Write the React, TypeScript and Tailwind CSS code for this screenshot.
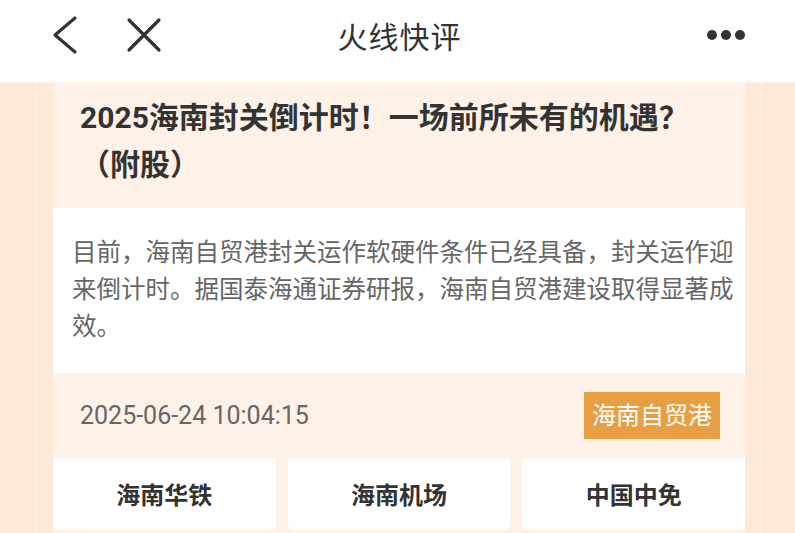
import React from 'react';

const stocks = ['海南华铁', '海南机场', '中国中免'];

export default function App() {
  return (
    <div
      className="w-[795px] h-[533px] overflow-hidden bg-[#fce9d6] text-[#333]"
      style={{ fontFamily: 'Roboto, "Noto Sans CJK SC", sans-serif' }}
    >
      {/* Top bar */}
      <div className="relative flex h-[82px] items-center bg-white pb-[12px]">
        <svg className="ml-[50px] h-[40px] w-[30px]" viewBox="0 0 30 40" fill="none">
          <path d="M25 3 L5 20 L25 37" stroke="#333" strokeWidth="3.2" strokeLinecap="round" strokeLinejoin="round" />
        </svg>
        <svg className="ml-[46px] h-[36px] w-[36px]" viewBox="0 0 36 36" fill="none">
          <path d="M3 3 L33 33 M33 3 L3 33" stroke="#333" strokeWidth="3.2" strokeLinecap="round" />
        </svg>
        <div className="flex-1 text-center text-[30px] tracking-[1px] text-[#333] -ml-[34px] pr-[36px] pt-[4px]">火线快评</div>
        <div className="mr-[50px] flex gap-[4px]">
          <span className="h-[10px] w-[10px] rounded-full bg-[#333]" />
          <span className="h-[10px] w-[10px] rounded-full bg-[#333]" />
          <span className="h-[10px] w-[10px] rounded-full bg-[#333]" />
        </div>
      </div>

      <div className="flex h-[451px] border-t border-[#fdf2e8]">
        <div className="w-[36px] shrink-0" />
        <div className="w-px shrink-0 bg-[#fff6ee]" />
        <div className="w-[16px] shrink-0" />

        {/* Card */}
        <div className="flex w-[692px] shrink-0 flex-col bg-[#fef1e7]">
          <div className="px-[27px] pt-[11px] pb-[20px] text-[30px] font-bold leading-[47px] text-[#333]">
            2025海南封关倒计时！一场前所未有的机遇？（附股）
          </div>
          <div className="bg-white pl-[19px] pr-[8px] pt-[26px] pb-[28px] text-[24.5px] leading-[37px] text-[#666]">
            目前，海南自贸港封关运作软硬件条件已经具备，封关运作迎来倒计时。据国泰海通证券研报，海南自贸港建设取得显著成效。
          </div>
          <div className="flex h-[85px] items-center justify-between pl-[27px] pr-[25px]">
            <span className="text-[25px] text-[#666]">2025-06-24 10:04:15</span>
            <span className="flex h-[47px] items-center bg-[#e69f45] px-[8px] text-[24px] text-white">海南自贸港</span>
          </div>
          <div className="grid grid-cols-3 gap-[12px]">
            {stocks.map((s) => (
              <div
                key={s}
                className="flex h-[72px] items-center justify-center rounded-b-[5px] bg-white pt-[3px] text-[24px] font-bold text-[#333]"
              >
                {s}
              </div>
            ))}
          </div>
        </div>

        <div className="w-[16px] shrink-0" />
        <div className="w-px shrink-0 bg-[#fff6ee]" />
        <div className="flex-1" />
      </div>
    </div>
  );
}
